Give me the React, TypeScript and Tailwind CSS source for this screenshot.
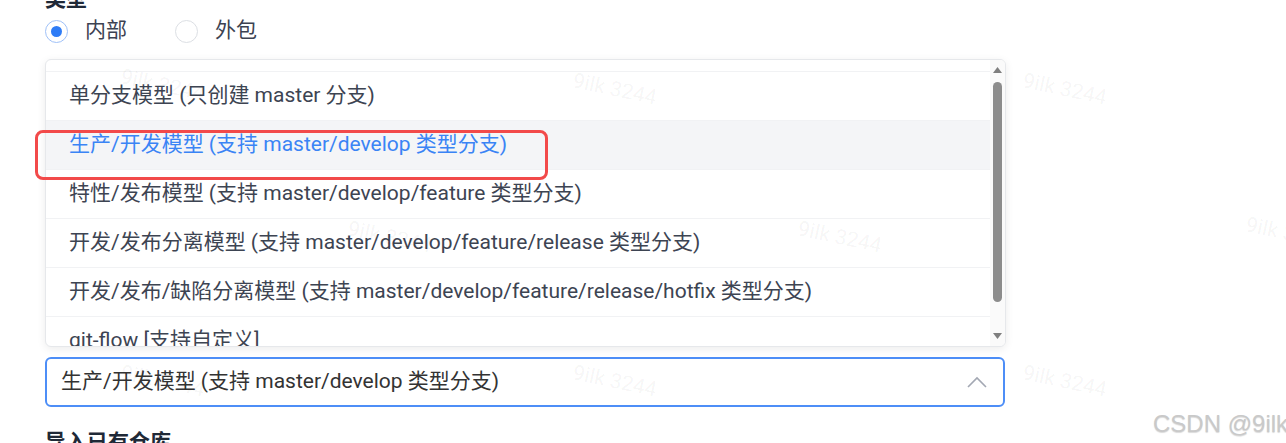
import React from "react";

const OPTIONS = [
  "单分支模型 (只创建 master 分支)",
  "生产/开发模型 (支持 master/develop 类型分支)",
  "特性/发布模型 (支持 master/develop/feature 类型分支)",
  "开发/发布分离模型 (支持 master/develop/feature/release 类型分支)",
  "开发/发布/缺陷分离模型 (支持 master/develop/feature/release/hotfix 类型分支)",
  "git-flow [支持自定义]",
];

const WATERMARKS = [
  { x: 120, y: 70 }, { x: 572, y: 74 }, { x: 1022, y: 74 },
  { x: 347, y: 222 }, { x: 797, y: 222 }, { x: 1245, y: 218 },
  { x: 120, y: 366 }, { x: 572, y: 366 }, { x: 1022, y: 366 },
];

function Radio({ checked, label }: { checked?: boolean; label: string }) {
  return (
    <div className="flex items-center gap-[17px]">
      <span
        className={[
          "w-[23px] h-[23px] rounded-full border flex items-center justify-center bg-white",
          checked ? "border-[#9fc1f8]" : "border-[#dcdfe4]",
        ].join(" ")}
      >
        {checked && <span className="w-[11px] h-[11px] rounded-full bg-[#2f7cf6]" />}
      </span>
      <span className="text-[21px] text-[#3c4252]">{label}</span>
    </div>
  );
}

export default function App() {
  return (
    <div
      className="relative w-[1286px] h-[443px] overflow-hidden bg-white"
      style={{ fontFamily: 'Roboto, "Noto Sans CJK SC", sans-serif' }}
    >
      <div className="pl-[45px] -mt-[15px]">
        <p className="text-[21px] leading-[28px] font-bold text-[#1f2937]">类型</p>

        <div className="h-[36px] flex items-center gap-[48px]">
          <Radio checked label="内部" />
          <Radio label="外包" />
        </div>

        {/* dropdown panel */}
        <div className="mt-[10px] w-[961px] h-[288px] border border-[#e6e8eb] rounded-[6px] overflow-hidden flex shadow-[0_2px_8px_rgba(0,0,0,0.08)] bg-white">
          <div className="flex-1 pt-[11px]">
            {OPTIONS.map((opt, i) => (
              <div
                key={opt}
                className={[
                  "h-[49px] border-t border-[#f1f2f4] flex items-center pl-[23px] text-[21px] whitespace-nowrap",
                  i === 1 ? "bg-[#f4f5f7] text-[#3a84f5]" : "text-[#3d4452]",
                ].join(" ")}
              >
                {opt}
              </div>
            ))}
          </div>
          <div className="w-[15px] bg-[#fafafa] flex flex-col items-center pt-[7px] pb-[7px]">
            <svg width="9" height="6" viewBox="0 0 9 6"><path d="M4.5 0 L9 6 L0 6 Z" fill="#7f7f7f" /></svg>
            <div className="mt-[9px] w-[9px] h-[220px] rounded-full bg-[#8c8c8c]" />
            <div className="flex-1" />
            <svg width="9" height="6" viewBox="0 0 9 6"><path d="M0 0 L9 0 L4.5 6 Z" fill="#7f7f7f" /></svg>
          </div>
        </div>

        {/* select */}
        <div className="mt-[10px] w-[960px] h-[50px] border-2 border-[#4d8ef7] rounded-[6px] flex items-center justify-between pl-[14px] pr-[16px]">
          <span className="text-[21px] text-[#333333] whitespace-nowrap">生产/开发模型 (支持 master/develop 类型分支)</span>
          <svg width="20" height="12" viewBox="0 0 20 12" fill="none">
            <path d="M1 11 L10 2 L19 11" stroke="#a3a8b3" strokeWidth="1.6" />
          </svg>
        </div>

        <p className="mt-[21px] text-[21px] leading-[28px] font-bold text-[#1f2937]">导入已有仓库</p>
      </div>

      {/* annotation */}
      <div className="absolute left-[35px] top-[130px] w-[513px] h-[50px] border-[3px] border-[#f24a4a] rounded-[8px] pointer-events-none" />

      {WATERMARKS.map((w, i) => (
        <span
          key={i}
          className="absolute text-[21px] text-black/[0.05] rotate-[12deg] pointer-events-none whitespace-nowrap"
          style={{ left: w.x, top: w.y }}
        >
          9ilk 3244
        </span>
      ))}

      <span
        className="absolute left-[1153px] top-[406px] text-[24px] text-[#c9c9c9] whitespace-nowrap [text-shadow:0_1px_1px_rgba(0,0,0,0.15)]"
        style={{ fontFamily: '"Liberation Sans", Arial, sans-serif' }}
      >
        CSDN @9ilk
      </span>
    </div>
  );
}
